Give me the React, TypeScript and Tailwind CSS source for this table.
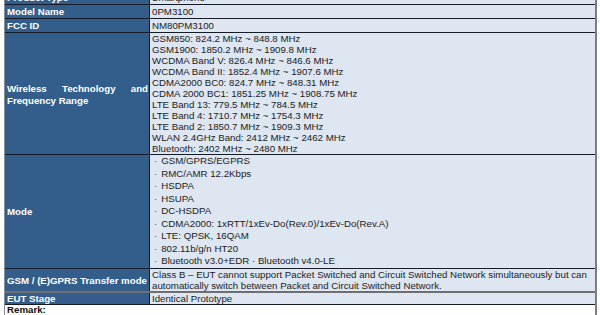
import React from 'react';

const font = { fontFamily: '"Liberation Sans", Arial, sans-serif' };

interface RowProps {
  label: React.ReactNode;
  children?: React.ReactNode;
  height: string;
  bottom: string;
}

const Row: React.FC<RowProps> = ({ label, children, height, bottom }) => (
  <div className={`flex shrink-0 ${height} ${bottom}`}>
    <div className="w-[145px] shrink-0 bg-[#335e8c] text-white font-bold pl-[2px] pr-[1px] flex items-center border-r border-[#141c27]">
      {label}
    </div>
    <div className="flex-1 bg-[#dde6f1] pl-[2px] pr-[3px] text-[#1c1c1c] flex flex-col justify-center">{children}</div>
  </div>
);

const wireless = [
  'GSM850: 824.2 MHz ~ 848.8 MHz',
  'GSM1900: 1850.2 MHz ~ 1909.8 MHz',
  'WCDMA Band V: 826.4 MHz ~ 846.6 MHz',
  'WCDMA Band II: 1852.4 MHz ~ 1907.6 MHz',
  'CDMA2000 BC0: 824.7 MHz ~ 848.31 MHz',
  'CDMA 2000 BC1: 1851.25 MHz ~ 1908.75 MHz',
  'LTE Band 13: 779.5 MHz ~ 784.5 MHz',
  'LTE Band 4: 1710.7 MHz ~ 1754.3 MHz',
  'LTE Band 2: 1850.7 MHz ~ 1909.3 MHz',
  'WLAN 2.4GHz Band: 2412 MHz ~ 2462 MHz',
  'Bluetooth: 2402 MHz ~ 2480 MHz',
];

const modes = [
  'GSM/GPRS/EGPRS',
  'RMC/AMR 12.2Kbps',
  'HSDPA',
  'HSUPA',
  'DC-HSDPA',
  'CDMA2000: 1xRTT/1xEv-Do(Rev.0)/1xEv-Do(Rev.A)',
  'LTE: QPSK, 16QAM',
  '802.11b/g/n HT20',
  'Bluetooth v3.0+EDR · Bluetooth v4.0-LE',
];

export default function App() {
  return (
    <div className="w-[600px] h-[315px] overflow-hidden bg-white text-[9.7px] leading-[11px]" style={font}>
      <div className="ml-[4px] w-[593px] h-[315px] flex flex-col border-l border-[#8c8c8c] border-r-2 border-r-[#7d7d7d]">
        {/* cut-off row above */}
        <div className="flex shrink-0 h-[5px] border-b border-[#141c27] overflow-hidden">
          <div className="w-[145px] shrink-0 bg-[#335e8c] text-white font-bold pl-[2px] border-r border-[#141c27]">
            <div className="-mt-[8px]">Product Type</div>
          </div>
          <div className="flex-1 bg-[#dde6f1] pl-[2px] text-[#1c1c1c]">
            <div className="-mt-[8px]">Smartphone</div>
          </div>
        </div>

        <Row label="Model Name" height="h-[14px]" bottom="border-b border-[#141c27]">
          <div>0PM3100</div>
        </Row>

        <Row label="FCC ID" height="h-[14px]" bottom="border-b border-[#141c27]">
          <div>NM80PM3100</div>
        </Row>

        <Row
          label={<div className="text-justify leading-[12px] pt-[3px]">Wireless Technology and Frequency Range</div>}
          height="h-[122px]"
          bottom="border-b border-[#141c27]"
        >
          {wireless.map((w) => (
            <div key={w} className="leading-[11px]">{w}</div>
          ))}
        </Row>

        <Row label="Mode" height="h-[114px]" bottom="border-b border-[#141c27]">
          {modes.map((m) => (
            <div key={m} className="leading-[12.5px] pl-[2px]">
              <span className="mr-[4px] text-[#555]">·</span>
              {m}
            </div>
          ))}
        </Row>

        <Row label="GSM / (E)GPRS Transfer mode" height="h-[24px]" bottom="border-b-2 border-[#6f6f6f]">
          <div className="leading-[11px]">
            Class B – EUT cannot support Packet Switched and Circuit Switched Network simultaneously but can
            <br />
            automatically switch between Packet and Circuit Switched Network.
          </div>
        </Row>

        <Row label="EUT Stage" height="h-[12px]" bottom="border-b border-[#141c27]">
          <div>Identical Prototype</div>
        </Row>

        <div className="flex-1 bg-white font-bold text-[#111] pl-[2px] leading-[10px]">Remark:</div>
      </div>
    </div>
  );
}
